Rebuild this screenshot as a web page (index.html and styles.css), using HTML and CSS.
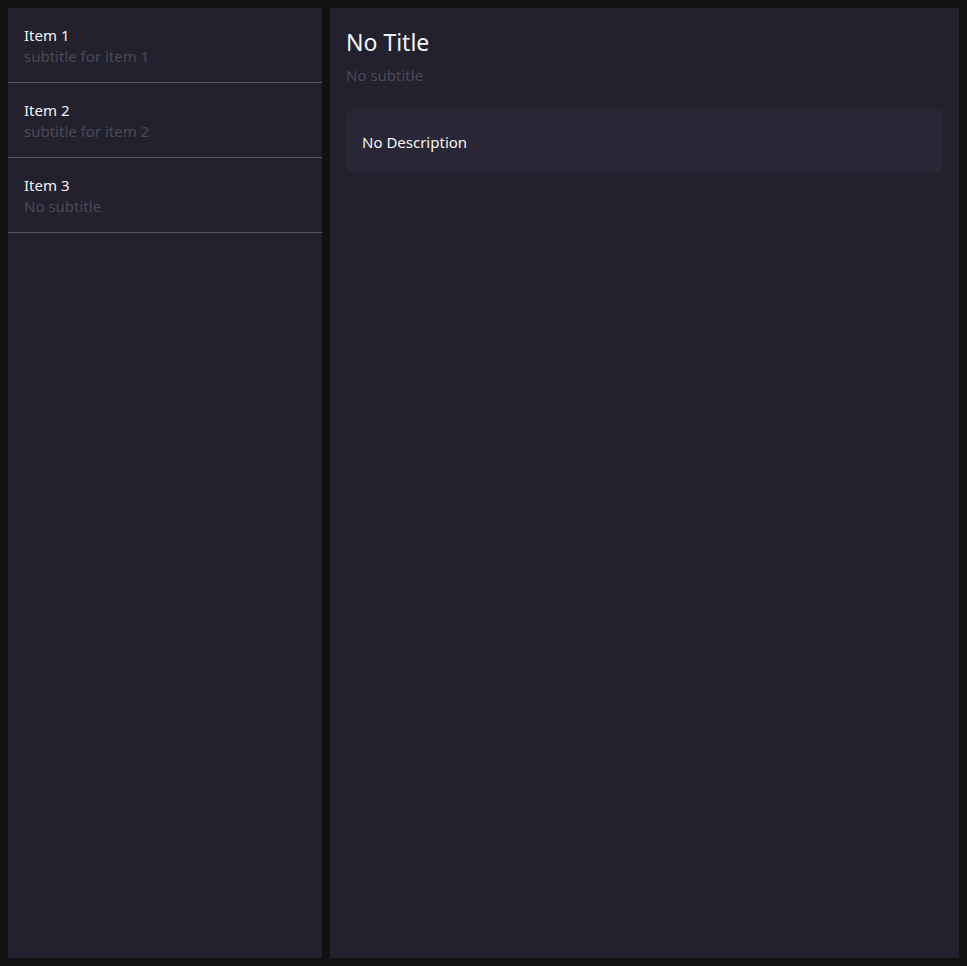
FILE: index.html
```html
<!DOCTYPE html>
<html>
<head>
<meta charset="utf-8">
<link rel="stylesheet" href="styles.css">
</head>
<body>
<div class="app">
  <aside class="sidebar">
    <div class="item">
      <div class="item-title">Item 1</div>
      <div class="item-sub">subtitle for item 1</div>
    </div>
    <div class="item">
      <div class="item-title">Item 2</div>
      <div class="item-sub">subtitle for item 2</div>
    </div>
    <div class="item">
      <div class="item-title">Item 3</div>
      <div class="item-sub">No subtitle</div>
    </div>
  </aside>
  <main class="detail">
    <h1 class="title">No Title</h1>
    <div class="subtitle">No subtitle</div>
    <div class="card">No Description</div>
  </main>
</div>
</body>
</html>
```
FILE: styles.css
```css
html, body {
  margin: 0;
  padding: 0;
  height: 100%;
  background: #111111;
}
body {
  font-family: "Noto Sans", "Open Sans", sans-serif;
  color: #f2f2f5;
}
.app {
  display: flex;
  gap: 8px;
  padding: 8px;
  height: 100%;
  box-sizing: border-box;
}
.sidebar {
  width: 314px;
  flex: none;
  background: #22212d;
}
.item {
  padding: 17px 16px 15px;
  border-bottom: 1px solid #56545f;
}
.item-title {
  font-size: 15px;
  line-height: 21px;
  color: #f4f4f7;
}
.item-sub {
  font-size: 15px;
  line-height: 21px;
  color: #4c4a57;
}
.detail {
  flex: 1;
  background: #22212d;
  padding: 17px 16px 16px;
}
.title {
  margin: 1px 0 0;
  font-size: 23px;
  font-weight: 400;
  line-height: 32px;
  color: #f4f4f7;
}
.subtitle {
  margin-top: 7px;
  font-size: 15px;
  line-height: 21px;
  color: #4c4a57;
}
.card {
  margin-top: 23px;
  background: #292735;
  border-radius: 8px;
  padding: 2px 16px 0;
  height: 64px;
  box-sizing: border-box;
  display: flex;
  align-items: center;
  font-size: 15px;
  color: #f4f4f7;
}
```
